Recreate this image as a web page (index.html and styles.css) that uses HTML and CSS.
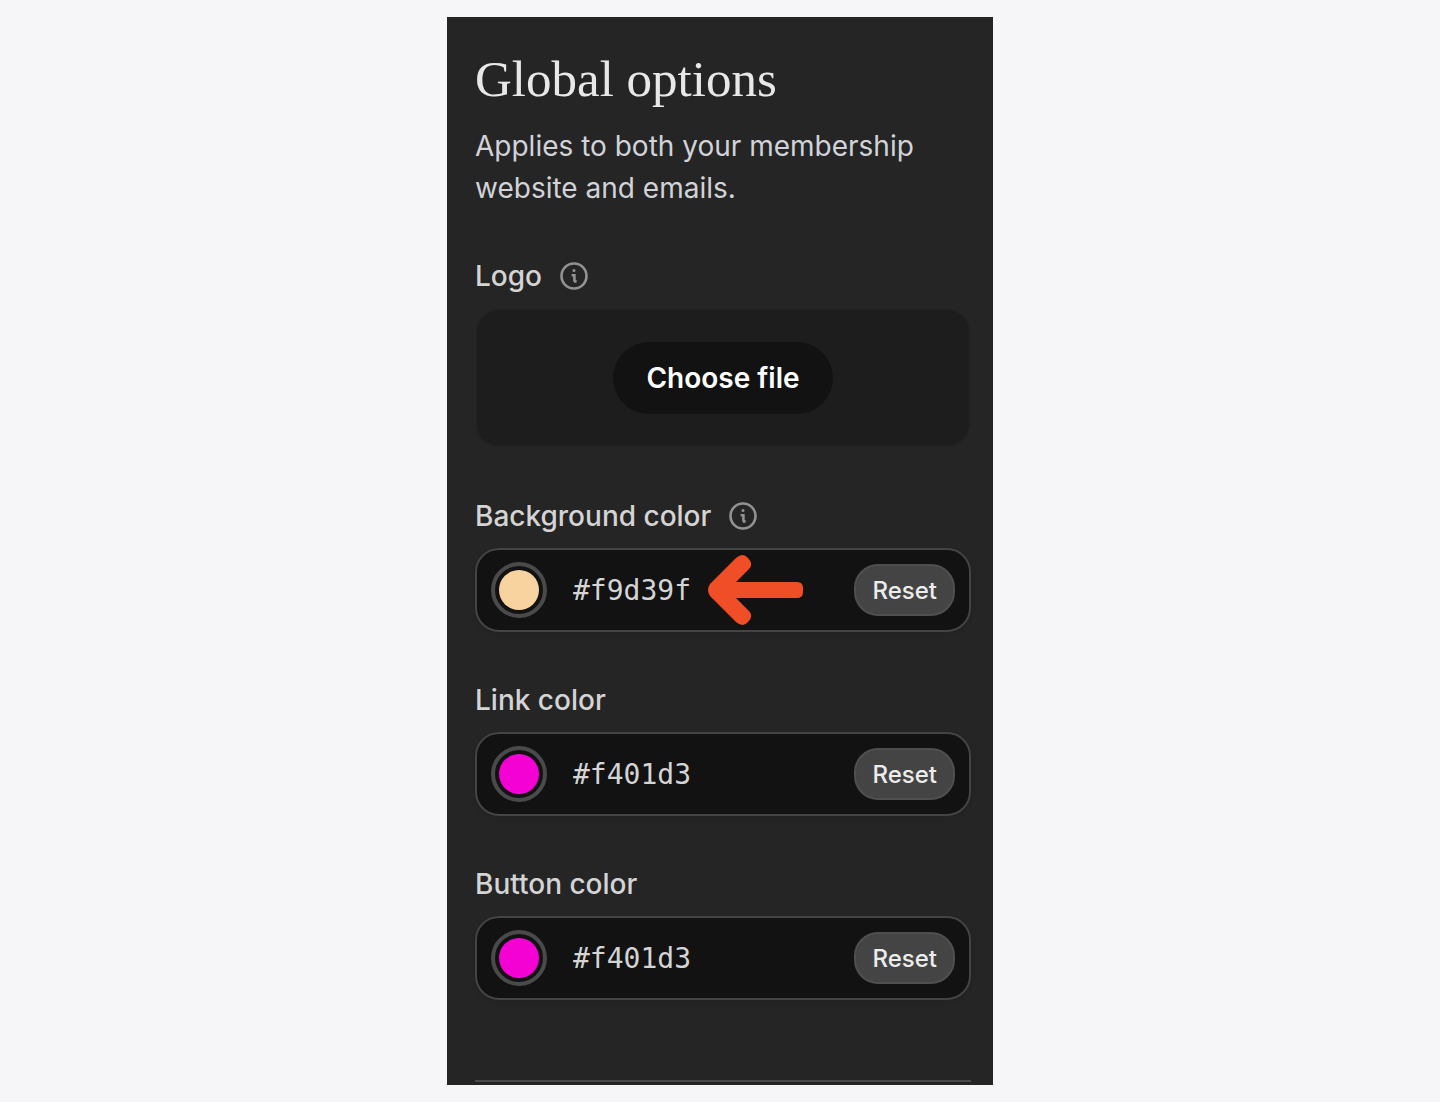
FILE: index.html
```html
<!DOCTYPE html>
<html lang="en">
<head>
    <meta charset="UTF-8">
    <title>Global options</title>
    <link rel="stylesheet" href="styles.css">
</head>
<body>
    <main class="panel">
        <h1>Global options</h1>
        <p class="description">Applies to both your membership website and emails.</p>

        <form id="optionsForm">
            <!-- Logo -->
            <div class="option">
                <div class="option-label">
                    <label for="logo">Logo</label>
                    <svg class="info" viewBox="0 0 28 28" aria-hidden="true">
                        <circle cx="14" cy="14" r="12.5" />
                        <circle class="dot" cx="14" cy="8.6" r="1.5" />
                        <path d="M11.6 13.2H14.4V19.6M14 19.4H16.6" />
                    </svg>
                </div>
                <div class="upload">
                    <button type="button" id="logo">Choose file</button>
                </div>
            </div>

            <!-- Background Color -->
            <div class="option">
                <div class="option-label">
                    <label for="background">Background color</label>
                    <svg class="info" viewBox="0 0 28 28" aria-hidden="true">
                        <circle cx="14" cy="14" r="12.5" />
                        <circle class="dot" cx="14" cy="8.6" r="1.5" />
                        <path d="M11.6 13.2H14.4V19.6M14 19.4H16.6" />
                    </svg>
                </div>
                <div class="color-field">
                    <input type="color" value="#f9d39f" aria-label="Pick background color">
                    <input type="text" id="background" value="#f9d39f">
                    <button type="reset">Reset</button>
                    <svg class="arrow" viewBox="0 0 96 70" aria-hidden="true">
                        <path d="M2 29L28 3Q35-3 40 3Q46 9 41 14L28 27H89Q95 27 95 33V37Q95 43 89 43H28L41 56Q46 61 40 67Q35 73 28 67L2 41Q-2 35 2 29Z" />
                    </svg>
                </div>
            </div>

            <!-- Link Color -->
            <div class="option">
                <div class="option-label">
                    <label for="link">Link color</label>
                </div>
                <div class="color-field">
                    <input type="color" value="#f401d3" aria-label="Pick link color">
                    <input type="text" id="link" value="#f401d3">
                    <button type="reset">Reset</button>
                </div>
            </div>

            <!-- Button Color -->
            <div class="option">
                <div class="option-label">
                    <label for="button">Button color</label>
                </div>
                <div class="color-field">
                    <input type="color" value="#f401d3" aria-label="Pick button color">
                    <input type="text" id="button" value="#f401d3">
                    <button type="reset">Reset</button>
                </div>
            </div>
        </form>
        <hr>
    </main>
</body>
</html>
```
FILE: styles.css
```css
* {
    box-sizing: border-box;
}

body {
    font-family: Inter, sans-serif;
    font-size: 28px;
    line-height: 42px;
    background: #f6f6f9;
    color: #d4d4d4;
    margin: 0;
    padding: 17px;
}

.panel {
    max-width: 546px;
    margin: 0 auto;
    padding: 32px 22px 3px 28px;
    background: #252525;
}

h1 {
    margin: 0 0 16px;
    font-family: "Liberation Serif", serif;
    font-size: 51px;
    font-weight: 400;
    line-height: 60px;
    color: #e8e8e8;
}

.description {
    margin: 0 0 46px;
    color: #d1d3d8;
}

.option {
    margin-bottom: 47px;
}

.option-label {
    display: flex;
    align-items: center;
    gap: 18px;
    margin-bottom: 11px;
    font-weight: 500;
}

.info {
    width: 28px;
    height: 28px;
    fill: none;
    stroke: #929292;
    stroke-width: 2.6;
}

.info .dot {
    fill: #929292;
    stroke: none;
}

.upload {
    display: flex;
    justify-content: center;
    padding: 32px;
    background: #1d1d1d;
    border: 2px solid #232323;
    border-radius: 24px;
}

button {
    font-family: inherit;
    cursor: pointer;
}

#logo {
    height: 72px;
    padding: 0 33px;
    background: #121212;
    color: #fff;
    border: none;
    border-radius: 36px;
    font-size: 28px;
    font-weight: 600;
}

.color-field {
    position: relative;
    display: flex;
    align-items: center;
    gap: 26px;
    padding: 12px 14px;
    background: #121212;
    border: 2px solid #444;
    border-radius: 24px;
    box-shadow: 0 2px 4px rgba(0, 0, 0, 0.1);
}

input[type="color"] {
    appearance: none;
    flex-shrink: 0;
    width: 56px;
    height: 56px;
    padding: 4px;
    background: none;
    border: 4px solid #4a4a4a;
    border-radius: 50%;
}

input[type="color"]::-webkit-color-swatch-wrapper {
    padding: 0;
}

input[type="color"]::-webkit-color-swatch {
    border: none;
    border-radius: 50%;
}

input[type="text"] {
    flex: 1;
    min-width: 0;
    padding: 0;
    background: none;
    color: #d4d4d4;
    border: none;
    font-family: "DejaVu Sans Mono", monospace;
    font-size: 28px;
}

button[type="reset"] {
    height: 52px;
    padding: 0 16px;
    background: #444;
    color: #ececec;
    border: 2px solid #4f4f4f;
    border-radius: 24px;
    font-size: 24px;
    font-weight: 500;
}

/* Pointer drawn over the field */
.arrow {
    position: absolute;
    top: 5px;
    left: 231px;
    width: 96px;
    height: 70px;
    fill: #f04e26;
}

hr {
    height: 2px;
    margin: 80px 0 0;
    background: #4a4a4a;
    border: none;
}
```
